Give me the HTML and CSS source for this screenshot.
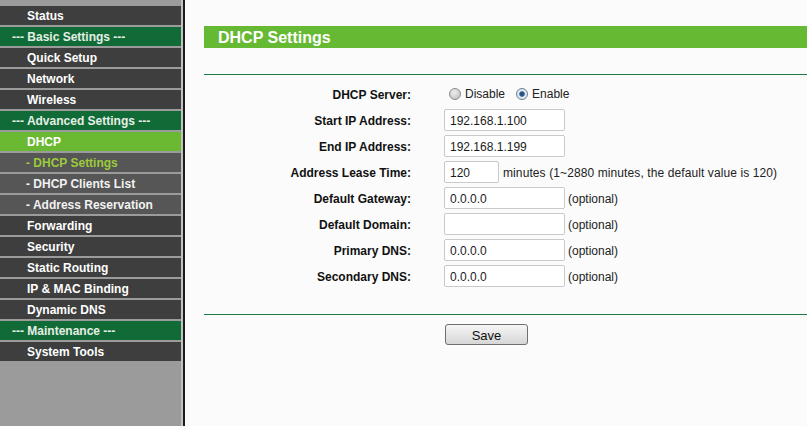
FILE: index.html
```html
<!DOCTYPE html>
<html>
<head>
<meta charset="utf-8">
<link rel="stylesheet" href="styles.css">
</head>
<body>
<div class="page">
  <div class="side-wrap">
    <nav class="sidebar">
      <div class="item">Status</div>
      <div class="item head">--- Basic Settings ---</div>
      <div class="item">Quick Setup</div>
      <div class="item">Network</div>
      <div class="item">Wireless</div>
      <div class="item head">--- Advanced Settings ---</div>
      <div class="item active">DHCP</div>
      <div class="item sub current">- DHCP Settings</div>
      <div class="item sub">- DHCP Clients List</div>
      <div class="item sub">- Address Reservation</div>
      <div class="item">Forwarding</div>
      <div class="item">Security</div>
      <div class="item">Static Routing</div>
      <div class="item">IP &amp; MAC Binding</div>
      <div class="item">Dynamic DNS</div>
      <div class="item head">--- Maintenance ---</div>
      <div class="item">System Tools</div>
    </nav>
  </div>
  <main class="main">
    <div class="title">DHCP Settings</div>
    <div class="rule top"></div>
    <div class="form">
      <div class="row">
        <div class="label">DHCP Server:</div>
        <div class="value radios">
          <input type="radio" name="srv" class="radio"><span class="rtext">Disable</span>
          <input type="radio" name="srv" class="radio on" checked><span class="rtext">Enable</span>
        </div>
      </div>
      <div class="row">
        <div class="label">Start IP Address:</div>
        <div class="value"><input class="field" type="text" value="192.168.1.100"></div>
      </div>
      <div class="row">
        <div class="label">End IP Address:</div>
        <div class="value"><input class="field" type="text" value="192.168.1.199"></div>
      </div>
      <div class="row">
        <div class="label">Address Lease Time:</div>
        <div class="value"><input class="field short" type="text" value="120"><span class="note lease">minutes (1~2880 minutes, the default value is 120)</span></div>
      </div>
      <div class="row">
        <div class="label">Default Gateway:</div>
        <div class="value"><input class="field" type="text" value="0.0.0.0"><span class="note">(optional)</span></div>
      </div>
      <div class="row">
        <div class="label">Default Domain:</div>
        <div class="value"><input class="field" type="text" value=""><span class="note">(optional)</span></div>
      </div>
      <div class="row">
        <div class="label">Primary DNS:</div>
        <div class="value"><input class="field" type="text" value="0.0.0.0"><span class="note">(optional)</span></div>
      </div>
      <div class="row">
        <div class="label">Secondary DNS:</div>
        <div class="value"><input class="field" type="text" value="0.0.0.0"><span class="note">(optional)</span></div>
      </div>
    </div>
    <div class="rule bottom"></div>
    <div class="actions">
      <button class="btn" type="button">Save</button>
    </div>
  </main>
</div>
</body>
</html>
```

FILE: styles.css
```css
html, body {
  margin: 0;
  padding: 0;
  height: 100%;
}
body {
  font-family: "Liberation Sans", Arial, sans-serif;
  font-size: 12px;
  background: #fbfbfb;
  overflow: hidden;
}
.page {
  display: flex;
  height: 426px;
}
.side-wrap {
  border-right: 2px solid #1c1c1c;
  background: #c2c2c2;
  padding-right: 2px;
}
.sidebar {
  width: 181px;
  height: 100%;
  box-sizing: border-box;
  background: #9b9b9b;
  padding-top: 6px;
  display: flex;
  flex-direction: column;
  gap: 2px;
}
.item {
  height: 19px;
  line-height: 21px;
  overflow: hidden;
  background: #3e3e3e;
  color: #ffffff;
  font-weight: bold;
  font-size: 12px;
  padding-left: 27px;
  white-space: nowrap;
}
.item.head {
  background: #116b36;
  color: #e6efe6;
  padding-left: 12px;
}
.item.active {
  background: #6bb832;
  color: #ffffff;
}
.item.sub {
  background: #565656;
  padding-left: 26px;
  color: #f2f2f2;
}
.item.sub.current {
  color: #9ccb3d;
}
.main {
  flex: 1;
  padding-left: 19px;
  padding-top: 26px;
  background: #fbfbfb;
}
.title {
  height: 22px;
  line-height: 24px;
  overflow: hidden;
  background: #66b933;
  color: #ffffff;
  font-size: 16px;
  font-weight: bold;
  padding-left: 14px;
}
.rule {
  height: 1px;
  background: #1d7a45;
}
.rule.top {
  margin-top: 26px;
}
.form {
  margin-top: 6px;
}
.row {
  display: flex;
  align-items: center;
  height: 26px;
}
.label {
  width: 207px;
  text-align: right;
  font-weight: bold;
  color: #111;
  padding-top: 1px;
}
.value {
  margin-left: 33px;
  display: flex;
  align-items: center;
  color: #222;
}
.field {
  box-sizing: border-box;
  width: 121px;
  height: 22px;
  border: 1px solid #c9c9c9;
  border-radius: 2px;
  background: #ffffff;
  font-family: "Liberation Sans", Arial, sans-serif;
  font-size: 12px;
  color: #1a1a1a;
  padding: 1px 5px 0;
  margin: 0;
}
.field.short {
  width: 55px;
}
.note {
  margin-left: 3px;
  color: #222;
  padding-top: 1px;
}
.note.lease {
  margin-left: 4px;
  letter-spacing: 0.1px;
}
.radios .radio {
  -webkit-appearance: none;
  appearance: none;
  width: 12px;
  height: 12px;
  margin: 0 4px 0 5px;
  border-radius: 50%;
  border: 1px solid #8c8c8c;
  background: radial-gradient(circle at 40% 35%, #eeeeee 0%, #cfcfcf 60%, #b5b5b5 100%);
  box-sizing: border-box;
}
.radios .radio.on {
  margin-left: 11px;
  border-color: #6a7f95;
  background: radial-gradient(circle, #1c4a78 0%, #2c5f92 33%, #e8eef4 45%, #cdd6e0 100%);
}
.rtext {
  color: #222;
}
.rule.bottom {
  margin-top: 25px;
}
.actions {
  padding-left: 241px;
  padding-top: 9px;
}
.btn {
  width: 83px;
  height: 21px;
  border: 1px solid #6f6f6f;
  border-radius: 3px;
  background: linear-gradient(#f6f6f6, #e6e6e6 50%, #d6d6d6);
  font-family: "Liberation Sans", Arial, sans-serif;
  font-size: 13px;
  color: #111;
  padding: 1px 0 0;
  margin: 0;
}
```
